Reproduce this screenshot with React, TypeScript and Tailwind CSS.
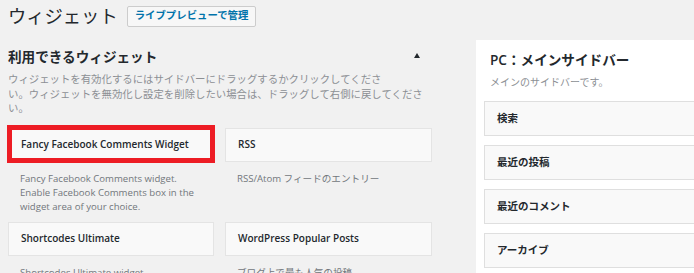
import React from "react";

const font = { fontFamily: "'Open Sans', 'Noto Sans CJK JP', sans-serif" };

type W = { title: string; desc: string[]; highlight?: boolean };

const widgets: W[] = [
  {
    title: "Fancy Facebook Comments Widget",
    desc: ["Fancy Facebook Comments widget.", "Enable Facebook Comments box in the", "widget area of your choice."],
    highlight: true,
  },
  { title: "RSS", desc: ["RSS/Atom フィードのエントリー"] },
  { title: "Shortcodes Ultimate", desc: ["Shortcodes Ultimate widget"] },
  { title: "WordPress Popular Posts", desc: ["ブログ上で最も人気の投稿"] },
];

const sidebarItems = ["検索", "最近の投稿", "最近のコメント", "アーカイブ"];

function WidgetCard({ w }: { w: W }) {
  return (
    <div className="flex flex-col">
      <div className="relative h-[34px] shrink-0 bg-[#f9f9f9] border border-[#e4e4e4] flex items-center pl-[12px] text-[10px] font-semibold text-[#23282d]">
        {w.title}
        {w.highlight && (
          <div className="absolute left-[-2px] right-[-2px] top-[-4px] bottom-[-2px] border-[5px] border-[#ed1c24]" />
        )}
      </div>
      <div className="mt-[10px] pl-[12px] text-[9.6px] leading-[14px] text-[#72777c]">
        {w.desc.map((l, i) => (
          <div key={i} className="whitespace-nowrap">
            {l}
          </div>
        ))}
      </div>
    </div>
  );
}

export default function App() {
  return (
    <div className="w-[694px] h-[273px] overflow-hidden bg-[#f1f1f1] flex items-start" style={font}>
      <div className="ml-[8px] w-[424px] shrink-0">
        <div className="h-[32px] flex items-center gap-[9px]">
          <h1 className="text-[18.3px] leading-none text-[#23282d] font-normal">ウィジェット</h1>
          <button className="h-[21px] px-[7px] border border-[#cccccc] bg-[#f7f7f7] text-[10.4px] font-bold text-[#0073aa] rounded-[2px] flex items-center">
            ライブプレビューで管理
          </button>
        </div>
        <div className="mt-[15px] h-[20px] flex items-center justify-between pr-[12px]">
          <h2 className="text-[13.6px] font-bold text-[#23282d]">利用できるウィジェット</h2>
          <div className="w-0 h-0 border-l-[3px] border-r-[3px] border-b-[5px] border-l-transparent border-r-transparent border-b-[#23282d] mb-[4px]" />
        </div>
        <div className="mt-[5px] text-[10.4px] leading-[14.5px] text-[#8c8f94]">
          <div className="whitespace-nowrap">ウィジェットを有効化するにはサイドバーにドラッグするかクリックしてくださ</div>
          <div className="whitespace-nowrap">い。ウィジェットを無効化し設定を削除したい場合は、ドラッグして右側に戻してくださ</div>
          <div className="whitespace-nowrap">い。</div>
        </div>
        <div className="mt-[12px] grid grid-cols-[206px_207px] gap-x-[11px] gap-y-[8px]">
          {widgets.map((w, i) => (
            <WidgetCard key={i} w={w} />
          ))}
        </div>
      </div>
      <div className="ml-[44px] mt-[40px] w-[260px] shrink-0 bg-white pl-[8px] pt-[10px] h-[260px]">
        <div className="pl-[6px] h-[20px] flex items-center text-[13.6px] font-semibold text-[#23282d]">
          PC：メインサイドバー
        </div>
        <div className="pl-[6px] mt-[5px] h-[14px] flex items-center text-[10px] text-[#8c8f94]">
          メインのサイドバーです。
        </div>
        <div className="mt-[12px] flex flex-col gap-[9px]">
          {sidebarItems.map((s) => (
            <div
              key={s}
              className="h-[35px] shrink-0 bg-[#f9f9f9] border border-[#dfdfdf] flex items-center pl-[12px] text-[10.5px] font-bold text-[#23282d]"
            >
              {s}
            </div>
          ))}
        </div>
      </div>
    </div>
  );
}
